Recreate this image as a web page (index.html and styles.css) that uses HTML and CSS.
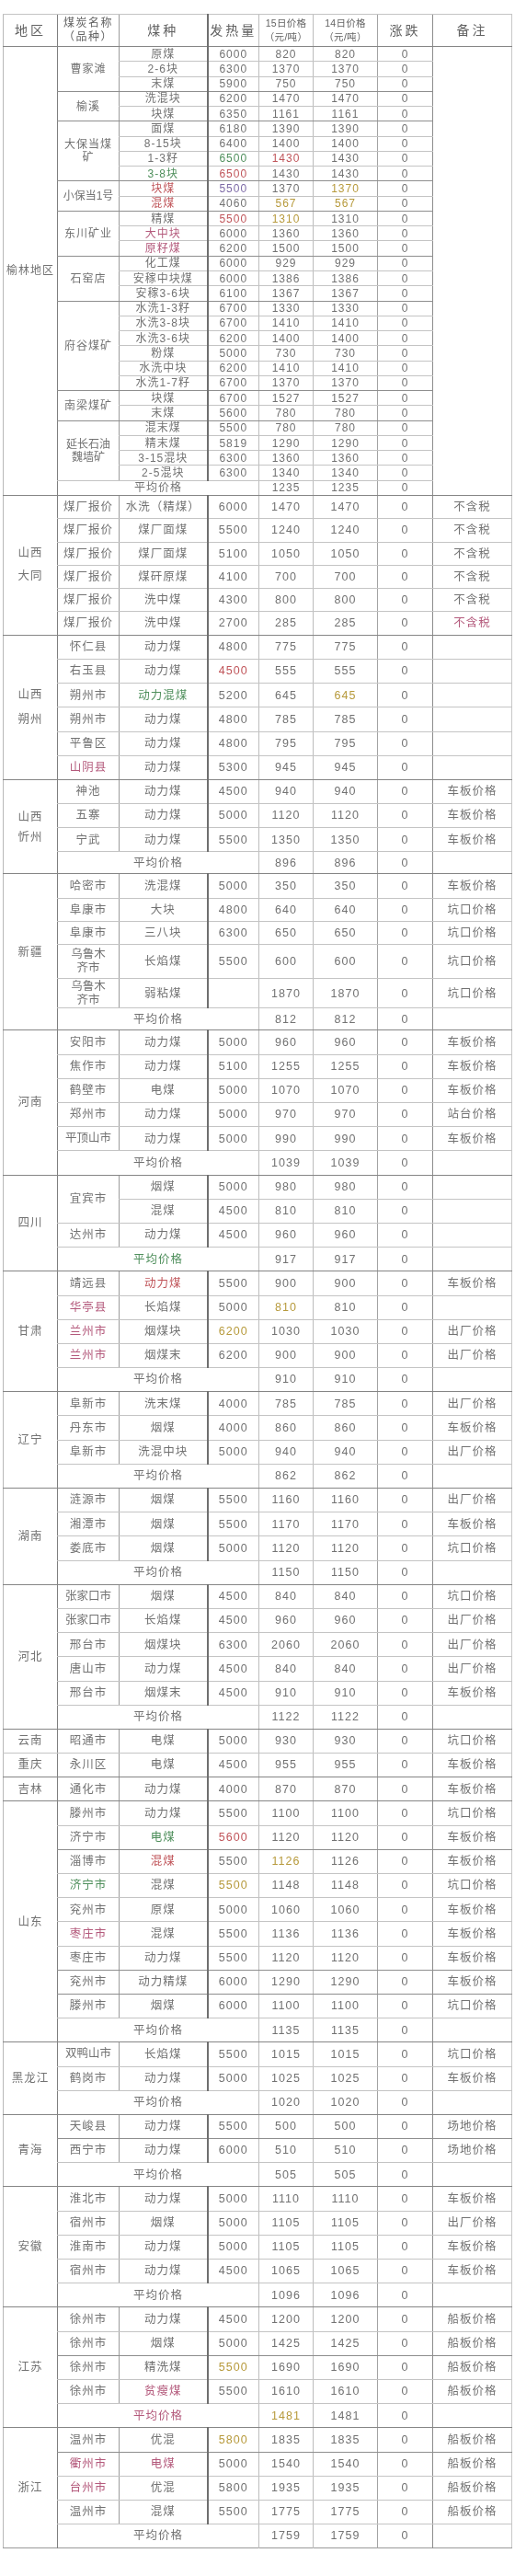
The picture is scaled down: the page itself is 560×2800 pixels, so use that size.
FILE: index.html
```html
<!DOCTYPE html>
<html lang="zh-CN">
<head>
<meta charset="utf-8">
<title>煤炭价格表</title>
<link rel="stylesheet" href="styles.css">
</head>
<body>
<div class="page">
<table class="sheet">
<colgroup>
<col class="c1"><col class="c2"><col class="c3"><col class="c4"><col class="c5"><col class="c6"><col class="c7"><col class="c8">
</colgroup>
<tbody>
<tr class="hd"><td class="big">地区</td><td class="nm">煤炭名称<br>（品种）</td><td class="big">煤种</td><td class="big">发热量</td><td class="sm">15日价格<br>（元/吨）</td><td class="sm">14日价格<br>（元/吨）</td><td class="big">涨跌</td><td class="big">备注</td></tr>

<tr class="ry sec"><td rowspan="30">榆林地区</td><td rowspan="3">曹家滩</td><td>原煤</td><td>6000</td><td>820</td><td>820</td><td>0</td><td rowspan="30"></td></tr>
<tr class="ry"><td>2-6块</td><td>6300</td><td>1370</td><td>1370</td><td>0</td></tr>
<tr class="ry"><td>末煤</td><td>5900</td><td>750</td><td>750</td><td>0</td></tr>
<tr class="ry grp"><td rowspan="2">榆溪</td><td>洗混块</td><td>6200</td><td>1470</td><td>1470</td><td>0</td></tr>
<tr class="ry"><td>块煤</td><td>6350</td><td>1161</td><td>1161</td><td>0</td></tr>
<tr class="ry grp"><td rowspan="4">大保当煤<br>矿</td><td>面煤</td><td>6180</td><td>1390</td><td>1390</td><td>0</td></tr>
<tr class="ry"><td>8-15块</td><td>6400</td><td>1400</td><td>1400</td><td>0</td></tr>
<tr class="ry"><td>1-3籽</td><td class="grn">6500</td><td class="red">1430</td><td>1430</td><td>0</td></tr>
<tr class="ry"><td class="grn">3-8块</td><td class="red">6500</td><td>1430</td><td>1430</td><td>0</td></tr>
<tr class="ry grp"><td rowspan="2" class="tight">小保当1号</td><td class="red">块煤</td><td class="vio">5500</td><td>1370</td><td class="ylw">1370</td><td>0</td></tr>
<tr class="ry"><td class="red">混煤</td><td>4060</td><td class="ylw">567</td><td class="ylw">567</td><td>0</td></tr>
<tr class="ry grp"><td rowspan="3">东川矿业</td><td>精煤</td><td class="red">5500</td><td class="ylw">1310</td><td>1310</td><td>0</td></tr>
<tr class="ry"><td class="pink">大中块</td><td>6000</td><td>1360</td><td>1360</td><td>0</td></tr>
<tr class="ry"><td class="pink">原籽煤</td><td>6200</td><td>1500</td><td>1500</td><td>0</td></tr>
<tr class="ry grp"><td rowspan="3">石窑店</td><td>化工煤</td><td>6000</td><td>929</td><td>929</td><td>0</td></tr>
<tr class="ry"><td>安稼中块煤</td><td>6000</td><td>1386</td><td>1386</td><td>0</td></tr>
<tr class="ry"><td>安稼3-6块</td><td>6100</td><td>1367</td><td>1367</td><td>0</td></tr>
<tr class="ry grp"><td rowspan="6">府谷煤矿</td><td>水洗1-3籽</td><td>6700</td><td>1330</td><td>1330</td><td>0</td></tr>
<tr class="ry"><td>水洗3-8块</td><td>6700</td><td>1410</td><td>1410</td><td>0</td></tr>
<tr class="ry"><td>水洗3-6块</td><td>6200</td><td>1400</td><td>1400</td><td>0</td></tr>
<tr class="ry"><td>粉煤</td><td>5000</td><td>730</td><td>730</td><td>0</td></tr>
<tr class="ry"><td>水洗中块</td><td>6200</td><td>1410</td><td>1410</td><td>0</td></tr>
<tr class="ry"><td>水洗1-7籽</td><td>6700</td><td>1370</td><td>1370</td><td>0</td></tr>
<tr class="ry grp"><td rowspan="2">南梁煤矿</td><td>块煤</td><td>6700</td><td>1527</td><td>1527</td><td>0</td></tr>
<tr class="ry"><td>末煤</td><td>5600</td><td>780</td><td>780</td><td>0</td></tr>
<tr class="ry grp"><td rowspan="4" class="tight">延长石油<br>魏墙矿</td><td>混末煤</td><td>5500</td><td>780</td><td>780</td><td>0</td></tr>
<tr class="ry"><td>精末煤</td><td>5819</td><td>1290</td><td>1290</td><td>0</td></tr>
<tr class="ry"><td>3-15混块</td><td>6300</td><td>1360</td><td>1360</td><td>0</td></tr>
<tr class="ry"><td>2-5混块</td><td>6300</td><td>1340</td><td>1340</td><td>0</td></tr>
<tr class="ry"><td colspan="3">平均价格</td><td>1235</td><td>1235</td><td>0</td></tr>

<tr class="rd sec"><td rowspan="6" class="lh25">山西<br>大同</td><td>煤厂报价</td><td>水洗（精煤）</td><td>6000</td><td>1470</td><td>1470</td><td>0</td><td>不含税</td></tr>
<tr class="rd"><td>煤厂报价</td><td>煤厂面煤</td><td>5500</td><td>1240</td><td>1240</td><td>0</td><td>不含税</td></tr>
<tr class="rd"><td>煤厂报价</td><td>煤厂面煤</td><td>5100</td><td>1050</td><td>1050</td><td>0</td><td>不含税</td></tr>
<tr class="rd"><td>煤厂报价</td><td>煤矸原煤</td><td>4100</td><td>700</td><td>700</td><td>0</td><td>不含税</td></tr>
<tr class="rd"><td>煤厂报价</td><td>洗中煤</td><td>4300</td><td>800</td><td>800</td><td>0</td><td>不含税</td></tr>
<tr class="rd"><td>煤厂报价</td><td>洗中煤</td><td>2700</td><td>285</td><td>285</td><td>0</td><td class="pink">不含税</td></tr>

<tr class="rn sec"><td rowspan="6" class="lh27">山西<br>朔州</td><td>怀仁县</td><td>动力煤</td><td>4800</td><td>775</td><td>775</td><td>0</td><td></td></tr>
<tr class="rn"><td>右玉县</td><td>动力煤</td><td class="red">4500</td><td>555</td><td>555</td><td>0</td><td></td></tr>
<tr class="rn"><td>朔州市</td><td class="grn">动力混煤</td><td>5200</td><td>645</td><td class="ylw">645</td><td>0</td><td></td></tr>
<tr class="rn"><td>朔州市</td><td>动力煤</td><td>4800</td><td>785</td><td>785</td><td>0</td><td></td></tr>
<tr class="rn"><td>平鲁区</td><td>动力煤</td><td>4800</td><td>795</td><td>795</td><td>0</td><td></td></tr>
<tr class="rn"><td class="pink">山阴县</td><td>动力煤</td><td>5300</td><td>945</td><td>945</td><td>0</td><td></td></tr>

<tr class="rn sec"><td rowspan="4" class="lh22">山西<br>忻州</td><td>神池</td><td>动力煤</td><td>4500</td><td>940</td><td>940</td><td>0</td><td>车板价格</td></tr>
<tr class="rn"><td>五寨</td><td>动力煤</td><td>5000</td><td>1120</td><td>1120</td><td>0</td><td>车板价格</td></tr>
<tr class="rn"><td>宁武</td><td>动力煤</td><td>5500</td><td>1350</td><td>1350</td><td>0</td><td>车板价格</td></tr>
<tr class="h24"><td colspan="3">平均价格</td><td>896</td><td>896</td><td>0</td><td></td></tr>

<tr class="h27 sec"><td rowspan="6">新疆</td><td>哈密市</td><td>洗混煤</td><td>5000</td><td>350</td><td>350</td><td>0</td><td>车板价格</td></tr>
<tr class="h25"><td>阜康市</td><td>大块</td><td>4800</td><td>640</td><td>640</td><td>0</td><td>坑口价格</td></tr>
<tr class="h25"><td>阜康市</td><td>三八块</td><td>6300</td><td>650</td><td>650</td><td>0</td><td>坑口价格</td></tr>
<tr class="h37"><td class="tight">乌鲁木<br>齐市</td><td>长焰煤</td><td>5500</td><td>600</td><td>600</td><td>0</td><td>坑口价格</td></tr>
<tr class="h32"><td class="tight">乌鲁木<br>齐市</td><td>弱粘煤</td><td></td><td>1870</td><td>1870</td><td>0</td><td>坑口价格</td></tr>
<tr class="h24"><td colspan="3">平均价格</td><td>812</td><td>812</td><td>0</td><td></td></tr>

<tr class="rn sec"><td rowspan="6">河南</td><td>安阳市</td><td>动力煤</td><td>5000</td><td>960</td><td>960</td><td>0</td><td>车板价格</td></tr>
<tr class="rn"><td>焦作市</td><td>动力煤</td><td>5100</td><td>1255</td><td>1255</td><td>0</td><td>车板价格</td></tr>
<tr class="rn"><td>鹤壁市</td><td>电煤</td><td>5000</td><td>1070</td><td>1070</td><td>0</td><td>车板价格</td></tr>
<tr class="rn"><td>郑州市</td><td>动力煤</td><td>5000</td><td>970</td><td>970</td><td>0</td><td>站台价格</td></tr>
<tr class="rn"><td class="tight">平顶山市</td><td>动力煤</td><td>5000</td><td>990</td><td>990</td><td>0</td><td>车板价格</td></tr>
<tr class="rn"><td colspan="3">平均价格</td><td>1039</td><td>1039</td><td>0</td><td></td></tr>

<tr class="rn sec"><td rowspan="4">四川</td><td rowspan="2">宜宾市</td><td>烟煤</td><td>5000</td><td>980</td><td>980</td><td>0</td><td></td></tr>
<tr class="rn"><td>混煤</td><td>4500</td><td>810</td><td>810</td><td>0</td><td></td></tr>
<tr class="rn"><td>达州市</td><td>动力煤</td><td>4500</td><td>960</td><td>960</td><td>0</td><td></td></tr>
<tr class="rn"><td colspan="3" class="grn">平均价格</td><td>917</td><td>917</td><td>0</td><td></td></tr>

<tr class="rn sec"><td rowspan="5">甘肃</td><td>靖远县</td><td class="red">动力煤</td><td>5500</td><td>900</td><td>900</td><td>0</td><td>车板价格</td></tr>
<tr class="rn"><td class="pink">华亭县</td><td>长焰煤</td><td>5000</td><td class="ylw">810</td><td>810</td><td>0</td><td></td></tr>
<tr class="rn"><td class="pink">兰州市</td><td>烟煤块</td><td class="ylw">6200</td><td>1030</td><td>1030</td><td>0</td><td>出厂价格</td></tr>
<tr class="rn"><td class="pink">兰州市</td><td>烟煤末</td><td>6200</td><td>900</td><td>900</td><td>0</td><td>出厂价格</td></tr>
<tr class="rn"><td colspan="3">平均价格</td><td>910</td><td>910</td><td>0</td><td></td></tr>

<tr class="rn sec"><td rowspan="4">辽宁</td><td>阜新市</td><td>洗末煤</td><td>4000</td><td>785</td><td>785</td><td>0</td><td>出厂价格</td></tr>
<tr class="rn"><td>丹东市</td><td>烟煤</td><td>4000</td><td>860</td><td>860</td><td>0</td><td>车板价格</td></tr>
<tr class="rn"><td>阜新市</td><td>洗混中块</td><td>5000</td><td>940</td><td>940</td><td>0</td><td>出厂价格</td></tr>
<tr class="rn"><td colspan="3">平均价格</td><td>862</td><td>862</td><td>0</td><td></td></tr>

<tr class="rn sec"><td rowspan="4">湖南</td><td>涟源市</td><td>烟煤</td><td>5500</td><td>1160</td><td>1160</td><td>0</td><td>出厂价格</td></tr>
<tr class="rn"><td>湘潭市</td><td>烟煤</td><td>5500</td><td>1170</td><td>1170</td><td>0</td><td>车板价格</td></tr>
<tr class="rn"><td>娄底市</td><td>烟煤</td><td>5000</td><td>1120</td><td>1120</td><td>0</td><td>坑口价格</td></tr>
<tr class="rn"><td colspan="3">平均价格</td><td>1150</td><td>1150</td><td>0</td><td></td></tr>

<tr class="rn sec"><td rowspan="6">河北</td><td class="tight">张家口市</td><td>烟煤</td><td>4500</td><td>840</td><td>840</td><td>0</td><td>坑口价格</td></tr>
<tr class="rn"><td class="tight">张家口市</td><td>长焰煤</td><td>4500</td><td>960</td><td>960</td><td>0</td><td>出厂价格</td></tr>
<tr class="rn"><td>邢台市</td><td>烟煤块</td><td>6300</td><td>2060</td><td>2060</td><td>0</td><td>出厂价格</td></tr>
<tr class="rn"><td>唐山市</td><td>动力煤</td><td>4500</td><td>840</td><td>840</td><td>0</td><td>出厂价格</td></tr>
<tr class="rn"><td>邢台市</td><td>烟煤末</td><td>4500</td><td>910</td><td>910</td><td>0</td><td>车板价格</td></tr>
<tr class="rn"><td colspan="3">平均价格</td><td>1122</td><td>1122</td><td>0</td><td></td></tr>

<tr class="rn sec"><td>云南</td><td>昭通市</td><td>电煤</td><td>5000</td><td>930</td><td>930</td><td>0</td><td>坑口价格</td></tr>
<tr class="rn"><td>重庆</td><td>永川区</td><td>电煤</td><td>4500</td><td>955</td><td>955</td><td>0</td><td>车板价格</td></tr>
<tr class="rn sec"><td>吉林</td><td>通化市</td><td>动力煤</td><td>4000</td><td>870</td><td>870</td><td>0</td><td>车板价格</td></tr>

<tr class="rn sec"><td rowspan="10">山东</td><td>滕州市</td><td>动力煤</td><td>5500</td><td>1100</td><td>1100</td><td>0</td><td>坑口价格</td></tr>
<tr class="rn"><td>济宁市</td><td class="grn">电煤</td><td class="red">5600</td><td>1120</td><td>1120</td><td>0</td><td>车板价格</td></tr>
<tr class="rn grp"><td>淄博市</td><td class="red">混煤</td><td>5500</td><td class="ylw">1126</td><td>1126</td><td>0</td><td>车板价格</td></tr>
<tr class="rn"><td class="grn">济宁市</td><td>混煤</td><td class="ylw">5500</td><td>1148</td><td>1148</td><td>0</td><td>坑口价格</td></tr>
<tr class="rn"><td>兖州市</td><td>原煤</td><td>5000</td><td>1060</td><td>1060</td><td>0</td><td>车板价格</td></tr>
<tr class="rn"><td class="pink">枣庄市</td><td>混煤</td><td>5500</td><td>1136</td><td>1136</td><td>0</td><td>车板价格</td></tr>
<tr class="rn"><td>枣庄市</td><td>动力煤</td><td>5500</td><td>1120</td><td>1120</td><td>0</td><td>车板价格</td></tr>
<tr class="rn grp"><td>兖州市</td><td>动力精煤</td><td>6000</td><td>1290</td><td>1290</td><td>0</td><td>车板价格</td></tr>
<tr class="rn grp"><td>滕州市</td><td>烟煤</td><td>6000</td><td>1100</td><td>1100</td><td>0</td><td>坑口价格</td></tr>
<tr class="rn"><td colspan="3">平均价格</td><td>1135</td><td>1135</td><td>0</td><td></td></tr>

<tr class="rn sec"><td rowspan="3">黑龙江</td><td class="tight">双鸭山市</td><td>长焰煤</td><td>5500</td><td>1015</td><td>1015</td><td>0</td><td>坑口价格</td></tr>
<tr class="rn"><td>鹤岗市</td><td>动力煤</td><td>5000</td><td>1025</td><td>1025</td><td>0</td><td>车板价格</td></tr>
<tr class="rn"><td colspan="3">平均价格</td><td>1020</td><td>1020</td><td>0</td><td></td></tr>

<tr class="rn sec"><td rowspan="3">青海</td><td>天峻县</td><td>动力煤</td><td>5500</td><td>500</td><td>500</td><td>0</td><td>场地价格</td></tr>
<tr class="rn grp"><td>西宁市</td><td>动力煤</td><td>6000</td><td>510</td><td>510</td><td>0</td><td>场地价格</td></tr>
<tr class="rn"><td colspan="3">平均价格</td><td>505</td><td>505</td><td>0</td><td></td></tr>

<tr class="rn sec"><td rowspan="5">安徽</td><td>淮北市</td><td>动力煤</td><td>5000</td><td>1110</td><td>1110</td><td>0</td><td>车板价格</td></tr>
<tr class="rn"><td>宿州市</td><td>烟煤</td><td>5000</td><td>1105</td><td>1105</td><td>0</td><td>出厂价格</td></tr>
<tr class="rn"><td>淮南市</td><td>动力煤</td><td>5000</td><td>1105</td><td>1105</td><td>0</td><td>车板价格</td></tr>
<tr class="rn"><td>宿州市</td><td>动力煤</td><td>4500</td><td>1065</td><td>1065</td><td>0</td><td>车板价格</td></tr>
<tr class="rn"><td colspan="3">平均价格</td><td>1096</td><td>1096</td><td>0</td><td></td></tr>

<tr class="rn sec"><td rowspan="5">江苏</td><td>徐州市</td><td>动力煤</td><td>4500</td><td>1200</td><td>1200</td><td>0</td><td>船板价格</td></tr>
<tr class="rn"><td>徐州市</td><td>烟煤</td><td>5000</td><td>1425</td><td>1425</td><td>0</td><td>船板价格</td></tr>
<tr class="rn grp"><td>徐州市</td><td>精洗煤</td><td class="ylw">5500</td><td>1690</td><td>1690</td><td>0</td><td>船板价格</td></tr>
<tr class="rn"><td>徐州市</td><td class="pink">贫瘦煤</td><td>5500</td><td>1610</td><td>1610</td><td>0</td><td>船板价格</td></tr>
<tr class="rn"><td colspan="3" class="pink">平均价格</td><td class="ylw">1481</td><td>1481</td><td>0</td><td></td></tr>

<tr class="rn sec"><td rowspan="5">浙江</td><td>温州市</td><td>优混</td><td class="ylw">5800</td><td>1835</td><td>1835</td><td>0</td><td>船板价格</td></tr>
<tr class="rn grp"><td class="pink">衢州市</td><td class="pink">电煤</td><td>5000</td><td>1540</td><td>1540</td><td>0</td><td>船板价格</td></tr>
<tr class="rn"><td class="pink">台州市</td><td>优混</td><td>5800</td><td>1935</td><td>1935</td><td>0</td><td>船板价格</td></tr>
<tr class="rn"><td>温州市</td><td>混煤</td><td>5500</td><td>1775</td><td>1775</td><td>0</td><td>船板价格</td></tr>
<tr class="rn"><td colspan="3">平均价格</td><td>1759</td><td>1759</td><td>0</td><td></td></tr>
</tbody>
</table>
</div>
</body>
</html>
```

FILE: styles.css
```css
html, body {
  margin: 0;
  padding: 0;
  background: #ffffff;
}

.page {
  width: 560px;
  padding: 15px 0 0 3px;
  box-sizing: border-box;
}

.sheet {
  border-collapse: collapse;
  table-layout: fixed;
  width: 553px;
  font-family: "Liberation Sans", "Noto Sans CJK SC", sans-serif;
  font-size: 12.5px;
  color: #727272;
  border-top: 1px solid #9a9a9a;
  border-left: 1px solid #b8b8b8;
  border-right: 1px solid #c8c8c8;
  border-bottom: 1px solid #9a9a9a;
  filter: blur(0.35px);
}

.sheet col.c1 { width: 59px; }
.sheet col.c2 { width: 67px; border-left: 1px solid #7f7f7f; }
.sheet col.c3 { width: 96px; border-left: 1px solid #9c9c9c; }
.sheet col.c4 { width: 56px; border-left: 2px solid #6f6f6f; }
.sheet col.c5 { width: 59px; border-left: 1px solid #bdbdbd; }
.sheet col.c6 { width: 70px; border-left: 1px solid #bdbdbd; }
.sheet col.c7 { width: 60px; border-left: 1px solid #a3a3a3; }
.sheet col.c8 { width: 86px; border-left: 1px solid #8c8c8c; }

.sheet td {
  padding: 0;
  text-align: center;
  vertical-align: middle;
  border-top: 1px solid #c4c4c4;
  line-height: 1.15;
  letter-spacing: 1px;
  white-space: nowrap;
}

.sheet tr.sec > td { border-top: 1px solid #858585; }
.sheet tr.grp > td { border-top: 1px solid #8e8e8e; }

/* header */
.sheet tr.hd { height: 35px; }
.sheet tr.hd > td { color: #626262; line-height: 15px; }
.sheet td.big { font-size: 14px; letter-spacing: 3px; }
.sheet td.nm { font-size: 12px; letter-spacing: 1.5px; }
.sheet td.sm { font-size: 10.5px; letter-spacing: 0.3px; }

/* row heights */
.sheet tr.ry { height: 16.27px; }
.sheet tr.ry > td { font-size: 12px; line-height: 14px; }
.sheet tr.rd { height: 25.3px; }
.sheet tr.rn { height: 26.2px; }
.sheet tr.h24 { height: 24px; }
.sheet tr.h25 { height: 25px; }
.sheet tr.h27 { height: 27px; }
.sheet tr.h32 { height: 32px; }
.sheet tr.h37 { height: 37px; }

.sheet td.tight { line-height: 15px; letter-spacing: 0; }
.sheet td.lh25 { line-height: 25px; }
.sheet td.lh27 { line-height: 27px; }
.sheet td.lh22 { line-height: 22px; }

/* scan tint accents */
.sheet td.red { color: #c0555a; }
.sheet td.grn { color: #4f8f5c; }
.sheet td.pink { color: #b45a7c; }
.sheet td.ylw { color: #b79a3c; }
.sheet td.vio { color: #7d6aa6; }
```
